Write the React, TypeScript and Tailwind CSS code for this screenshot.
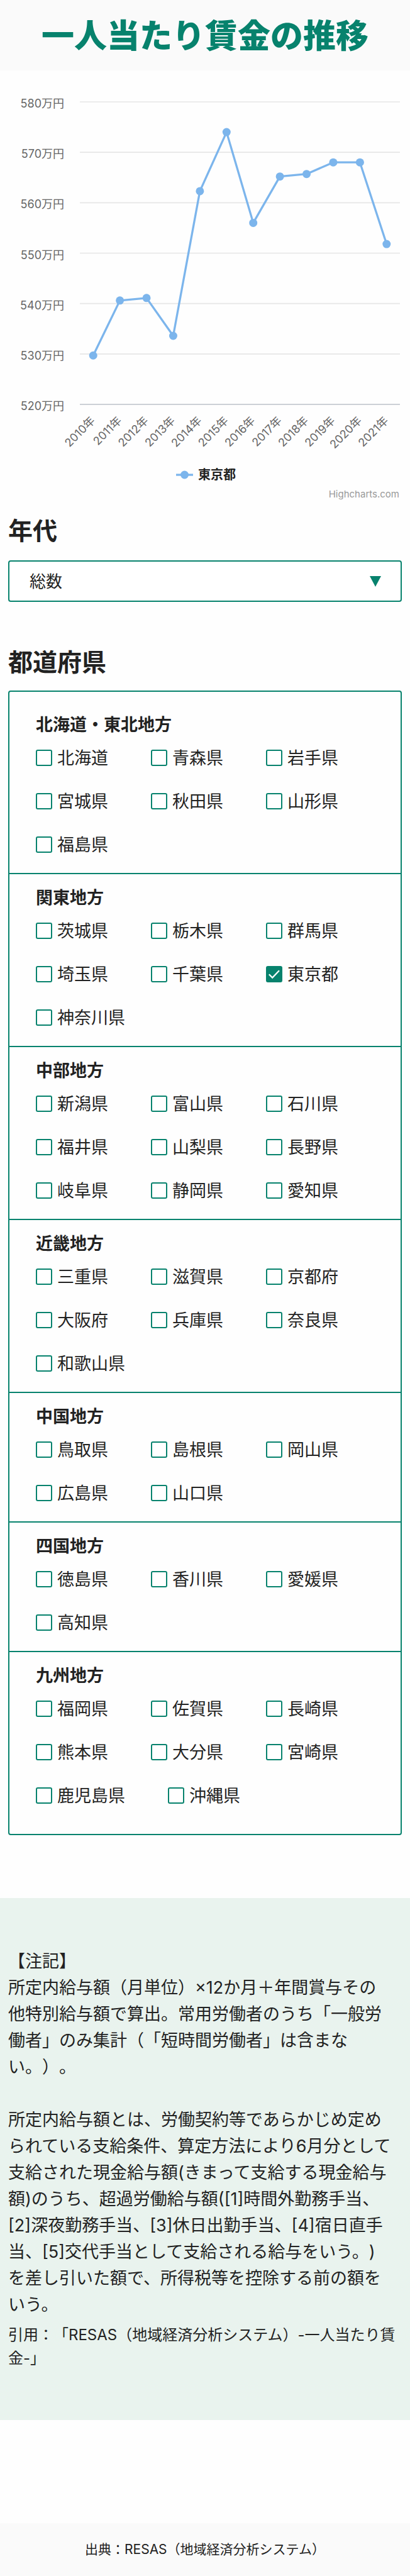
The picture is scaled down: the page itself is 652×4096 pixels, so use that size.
import { useId, useState } from "react";

type Region = { name: string; prefectures: string[] };

const regions: Region[] = [
  {
    name: "北海道・東北地方",
    prefectures: ["北海道", "青森県", "岩手県", "宮城県", "秋田県", "山形県", "福島県"],
  },
  {
    name: "関東地方",
    prefectures: ["茨城県", "栃木県", "群馬県", "埼玉県", "千葉県", "東京都", "神奈川県"],
  },
  {
    name: "中部地方",
    prefectures: [
      "新潟県", "富山県", "石川県", "福井県", "山梨県", "長野県", "岐阜県", "静岡県", "愛知県",
    ],
  },
  {
    name: "近畿地方",
    prefectures: ["三重県", "滋賀県", "京都府", "大阪府", "兵庫県", "奈良県", "和歌山県"],
  },
  { name: "中国地方", prefectures: ["鳥取県", "島根県", "岡山県", "広島県", "山口県"] },
  { name: "四国地方", prefectures: ["徳島県", "香川県", "愛媛県", "高知県"] },
  {
    name: "九州地方",
    prefectures: [
      "福岡県", "佐賀県", "長崎県", "熊本県", "大分県", "宮崎県", "鹿児島県", "沖縄県",
    ],
  },
];

const noteText = `【注記】
所定内給与額（月単位）×12か月＋年間賞与その
他特別給与額で算出。常用労働者のうち「一般労
働者」のみ集計（「短時間労働者」は含まな
い。）。

所定内給与額とは、労働契約等であらかじめ定め
られている支給条件、算定方法により6月分として
支給された現金給与額(きまって支給する現金給与
額)のうち、超過労働給与額([1]時間外勤務手当、
[2]深夜勤務手当、[3]休日出勤手当、[4]宿日直手
当、[5]交代手当として支給される給与をいう。)
を差し引いた額で、所得税等を控除する前の額を
いう。`;

const citation = `引用：「RESAS（地域経済分析システム）-一人当たり賃
金-」`;

// Average yearly wage in units of 10,000 yen, 2010 to 2021.
const wages = [529.7, 540.6, 541.1, 533.6, 562.3, 574.0, 556.0, 565.2, 565.7, 568.0, 568.0, 551.8];
const ticks = [580, 570, 560, 550, 540, 530, 520];

const plot = { left: 127, right: 636, top: 50, bottom: 531 };
const yOf = (v: number) => plot.bottom - ((v - 520) / 60) * (plot.bottom - plot.top);
const xOf = (i: number) =>
  plot.left + ((i + 0.5) * (plot.right - plot.left)) / wages.length;

function WageChart() {
  return (
    <svg
      viewBox="0 0 652 700"
      className="block w-full"
      role="img"
      aria-label="一人当たり賃金の推移"
    >
      {ticks.map((t) => (
        <g key={t}>
          <line
            x1={plot.left}
            x2={plot.right}
            y1={yOf(t)}
            y2={yOf(t)}
            stroke={t === 520 ? "#ccd0d6" : "#e6e6e6"}
            strokeWidth={t === 520 ? 2 : 1.6}
          />
          <text x={102} y={yOf(t) + 9} textAnchor="end" fontSize={18} fill="#666666">
            {t}万円
          </text>
        </g>
      ))}
      {wages.map((_, i) => (
        <text
          key={i}
          transform={`translate(${xOf(i) + 4} ${558}) rotate(-45)`}
          textAnchor="end"
          fontSize={18}
          fill="#666666"
        >
          {2010 + i}年
        </text>
      ))}
      <polyline
        points={wages.map((v, i) => `${xOf(i)},${yOf(v)}`).join(" ")}
        fill="none"
        stroke="#7cb5ec"
        strokeWidth={3.3}
        strokeLinejoin="round"
      />
      {wages.map((v, i) => (
        <circle key={i} cx={xOf(i)} cy={yOf(v)} r={6.5} fill="#7cb5ec" />
      ))}
      <line x1={280} x2={307} y1={643} y2={643} stroke="#7cb5ec" strokeWidth={3.3} />
      <circle cx={293.5} cy={643} r={6.5} fill="#7cb5ec" />
      <text x={315} y={650} fontSize={20} fontWeight={700} fill="#222222">
        東京都
      </text>
      <text x={635} y={679} textAnchor="end" fontSize={15} fill="#999999">
        Highcharts.com
      </text>
    </svg>
  );
}

function PrefectureCheckbox({
  name,
  checked,
  onToggle,
}: {
  name: string;
  checked: boolean;
  onToggle: () => void;
}) {
  const id = useId();
  return (
    <div className="mr-[68px] flex h-[69px] items-center gap-2">
      <span className="grid size-[26px] place-items-center">
        <input
          id={id}
          type="checkbox"
          checked={checked}
          onChange={onToggle}
          className="peer size-[26px] appearance-none rounded-[3px] border-2 border-[#07826d] bg-white [grid-area:1/1] checked:bg-[#07826d]"
        />
        <svg
          viewBox="0 0 26 26"
          className="pointer-events-none hidden size-[26px] [grid-area:1/1] peer-checked:block"
          fill="none"
          stroke="#ffffff"
          strokeWidth="2.2"
        >
          <path d="M4.8 13.2 L10.2 18.6 L21 7.2" />
        </svg>
      </span>
      <label htmlFor={id} className="pt-0.5 text-[27px] leading-9">
        {name}
      </label>
    </div>
  );
}

export default function App() {
  const [age, setAge] = useState("総数");
  const [selected, setSelected] = useState<string[]>(["東京都"]);

  const toggle = (name: string) =>
    setSelected((prev) =>
      prev.includes(name) ? prev.filter((p) => p !== name) : [...prev, name],
    );

  return (
    <div className="bg-[#fefefe] font-[Inter,'Noto_Sans_CJK_JP',sans-serif] text-[#222222] [text-spacing-trim:space-all]" lang="ja">
      <header className="bg-[#fafafa] pt-[22px] pb-[18px]">
        <h1 className="text-center text-[52px] leading-[72px] font-black text-[#07826d]">
          一人当たり賃金の推移
        </h1>
      </header>

      <main>
        <WageChart />

        <section className="px-[13px]">
          <h2 className="text-[39px] leading-[64px] font-bold">
            <label htmlFor="age">年代</label>
          </h2>
          <div className="relative mt-[15px]">
            <select
              id="age"
              value={age}
              onChange={(e) => setAge(e.target.value)}
              className="h-[66px] w-full appearance-none rounded border-2 border-[#07826d] bg-white px-8 text-[26px]"
            >
              <option>総数</option>
              <option>～19歳</option>
              <option>20～24歳</option>
              <option>25～29歳</option>
            </select>
            <svg
              viewBox="0 0 18 17"
              className="pointer-events-none absolute top-[25px] right-[33px] h-[17px] w-[18px]"
              fill="#07826d"
            >
              <path d="M0 0H18L9 17Z" />
            </svg>
          </div>
        </section>

        <section className="mt-16 px-[13px]">
          <h2 className="text-[39px] leading-[64px] font-bold">都道府県</h2>
          <div className="mt-[13px] rounded border-2 border-[#07826d] bg-[#fefefe] pt-[15px] pb-4">
            {regions.map((region) => (
              <fieldset
                key={region.name}
                className="border-b-2 border-[#07826d] pt-5 pb-[11px] pl-[42px] last:border-b-0"
              >
                <legend className="float-left w-full text-[27px] leading-[35px] font-bold">
                  {region.name}
                </legend>
                <div className="clear-both flex flex-wrap">
                  {region.prefectures.map((name) => (
                    <PrefectureCheckbox
                      key={name}
                      name={name}
                      checked={selected.includes(name)}
                      onToggle={() => toggle(name)}
                    />
                  ))}
                </div>
              </fieldset>
            ))}
          </div>
        </section>

        <section className="mt-[100px] bg-[#e9f3ee] px-[13px] pt-20 pb-20">
          <p className="text-[27px] leading-[42px] whitespace-pre-line">{noteText}</p>
          <p className="mt-2 text-[24px] leading-[37px] whitespace-pre-line">{citation}</p>
        </section>
      </main>

      <footer className="mt-[164px] bg-[#fafafa] py-6 text-center text-[21px] leading-9">
        出典：RESAS（地域経済分析システム）
      </footer>
    </div>
  );
}
